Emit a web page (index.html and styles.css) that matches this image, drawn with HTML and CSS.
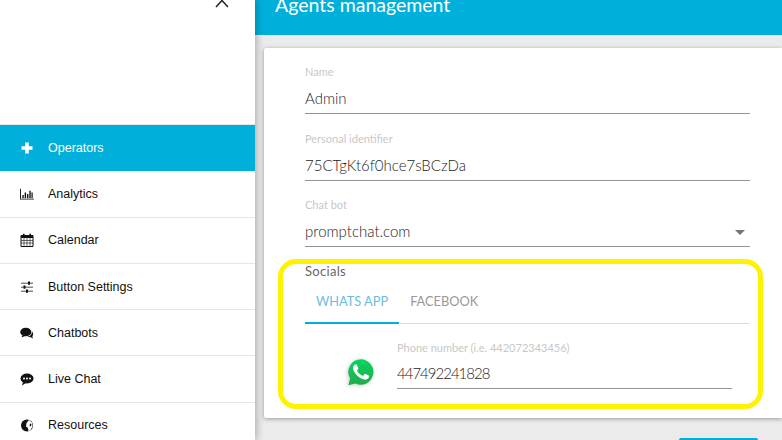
FILE: index.html
```html
<!DOCTYPE html>
<html lang="en">
<head>
    <meta charset="UTF-8">
    <title>Agents management</title>
    <link rel="stylesheet" href="styles.css">
</head>
<body>
    <div class="page">
        <div class="sidebar">
            <div class="sidebar-top">
                <svg class="close-icon" width="14" height="14" viewBox="0 0 14 14"><path d="M1 8 L7 1.500 L13 8" fill="none" stroke="#222" stroke-width="1.500"/></svg>
            </div>
            <div class="nav-item active">
                <svg class="nav-icon" viewBox="0 0 14 14"><path d="M5.200 1.500h3.600v3.700h3.700v3.600H8.800v3.700H5.200V8.800H1.500V5.200h3.700z" fill="#fff"/></svg>
                <span>Operators</span>
            </div>
            <div class="nav-item">
                <svg class="nav-icon" viewBox="0 0 15 14"><path d="M0 1.500h1v10.500h14v1H0z" fill="#111"/><path d="M2.500 8h1.500v3.500H2.500zM5 5.500h1.500v6H5zM7.500 7h1.500v4.500H7.500zM10 3.500h1.500v8H10zM12.300 5.500h1.300v6h-1.300z" fill="#111"/></svg>
                <span>Analytics</span>
            </div>
            <div class="nav-item">
                <svg class="nav-icon" viewBox="0 0 14 14"><path d="M1 2.500h12v11H1z" fill="none" stroke="#111"/><path d="M1 2.500h12v2.500H1zM3 .7h1.600v3H3zM9.400 .7H11v3H9.400z" fill="#111"/><path d="M1 7.500h12M1 10h12M4 5v8M7 5v8M10 5v8" stroke="#111" stroke-width=".6"/></svg>
                <span>Calendar</span>
            </div>
            <div class="nav-item">
                <svg class="nav-icon" viewBox="0 0 14 14"><path d="M1 2.800h12v.8H1zM1 6.800h12v.8H1zM1 10.800h12v.8H1z" fill="#111"/><path d="M8 1.500h2v3.300H8zM3.500 5.500h2v3.300h-2zM6 9.500h2v3.300H6z" fill="#111"/></svg>
                <span>Button Settings</span>
            </div>
            <div class="nav-item">
                <svg class="nav-icon" viewBox="0 0 14 14"><ellipse cx="5.800" cy="6" rx="5.600" ry="4.300" fill="#111"/><path d="M2.500 9l-1 2.500 3.500-1.500z" fill="#111"/><path d="M12 5.500c1.500 1.500 1.500 3.500.3 4.700l.7 2.300-2.800-1.400c-1 .2-2 .1-3-.3 2.700-.3 5-2.500 4.800-5.300z" fill="#111"/></svg>
                <span>Chatbots</span>
            </div>
            <div class="nav-item">
                <svg class="nav-icon" viewBox="0 0 14 14"><ellipse cx="7" cy="6.500" rx="6.500" ry="5" fill="#111"/><path d="M3 10l-1 3.500 4-2.500z" fill="#111"/><circle cx="4" cy="6.500" r="1" fill="#fff"/><circle cx="7" cy="6.500" r="1" fill="#fff"/><circle cx="10" cy="6.500" r="1" fill="#fff"/></svg>
                <span>Live Chat</span>
            </div>
            <div class="nav-item">
                <svg class="nav-icon" viewBox="0 0 14 14"><circle cx="7" cy="7.500" r="6" fill="#111"/><path d="M6.500 5l2.500-3 3 2.500 .5 4-2 3.500-2 1.500-.5-3.500-2-1.500z" fill="#fff"/><path d="M10 5.500l1.500 .5-.5 2-1.500 .5z" fill="#111"/></svg>
                <span>Resources</span>
            </div>
        </div>

        <div class="main">
            <div class="header">
                <h1>Agents management</h1>
            </div>
            <div class="content">
                <div class="card">
                    <div class="field">
                        <label>Name</label>
                        <div class="value">Admin</div>
                    </div>
                    <div class="field">
                        <label>Personal identifier</label>
                        <div class="value">75CTgKt6f0hce7sBCzDa</div>
                    </div>
                    <div class="field">
                        <label>Chat bot</label>
                        <div class="value select">promptchat.com<i class="caret"></i></div>
                    </div>
                    <div class="socials-title">Socials</div>
                    <div class="tabs">
                        <div class="tab active">WHATS APP</div>
                        <div class="tab">FACEBOOK</div>
                    </div>
                    <div class="social-row">
                        <svg class="whatsapp" width="32" height="32" viewBox="0 0 24 24">
                            <defs>
                                <linearGradient id="wa" x1="0" y1="0" x2="0" y2="1">
                                    <stop offset="0" stop-color="#05d561"/>
                                    <stop offset="1" stop-color="#22ab48"/>
                                </linearGradient>
                            </defs>
                            <path d="M12 2.500a9.500 9.500 0 0 0-8.200 14.300L2.500 22l5.300-1.400A9.500 9.500 0 1 0 12 2.500z" fill="url(#wa)"/>
                            <path d="M17.472 14.382c-.297-.149-1.758-.867-2.030-.967-.273-.099-.471-.148-.670.150-.197.297-.767.966-.940 1.164-.173.199-.347.223-.644.075-.297-.150-1.255-.463-2.390-1.475-.883-.788-1.480-1.761-1.653-2.059-.173-.297-.018-.458.130-.606.134-.133.298-.347.446-.520.149-.174.198-.298.298-.497.099-.198.050-.371-.025-.520-.075-.149-.669-1.612-.916-2.207-.242-.579-.487-.500-.669-.510-.173-.008-.371-.010-.570-.010-.198 0-.520.074-.792.372-.272.297-1.040 1.016-1.040 2.479 0 1.462 1.065 2.875 1.213 3.074.149.198 2.096 3.200 5.077 4.487.709.306 1.262.489 1.694.625.712.227 1.360.195 1.871.118.571-.085 1.758-.719 2.006-1.413.248-.694.248-1.289.173-1.413-.074-.124-.272-.198-.570-.347z" fill="#fff"/>
                        </svg>
                        <div class="field phone">
                            <label>Phone number (i.e. 442072343456)</label>
                            <div class="value">447492241828</div>
                        </div>
                    </div>
                </div>
                <div class="save-btn"></div>
            </div>
        </div>
    </div>
    <div class="highlight"></div>
</body>
</html>
```

FILE: styles.css
```css
html, body {
    margin: 0;
    padding: 0;
    height: 440px;
    overflow: hidden;
}

body {
    font-family: 'Lato', 'Liberation Sans', sans-serif;
    background-color: #ebebeb;
}

.page {
    display: flex;
    height: 440px;
}

.sidebar {
    width: 255px;
    flex-shrink: 0;
    background-color: #fff;
    box-shadow: 2px 0 7px rgba(0, 0, 0, 0.25);
    z-index: 2;
    font-family: 'Liberation Sans', sans-serif;
    font-size: 12.500px;
    color: #111;
}

.sidebar-top {
    height: 124px;
    border-bottom: 1px solid #e6e6e6;
    display: flex;
    justify-content: flex-end;
    overflow: hidden;
}

.close-icon {
    margin: -1px 26px 0 0;
}

.nav-item {
    display: flex;
    align-items: center;
    height: 45.300px;
    border-bottom: 1px solid #e6e6e6;
    padding-left: 20px;
}

.nav-item.active {
    background-color: #00b0da;
    color: #fff;
    border-bottom-color: transparent;
}

.nav-icon {
    width: 14px;
    height: 14px;
    margin-right: 14px;
}

.main {
    flex: 1;
    min-width: 0;
}

.header {
    height: 35px;
    background-color: #00b0da;
    overflow: hidden;
}

.header h1 {
    margin: -7px 0 0 20px;
    font-size: 19.500px;
    line-height: 24px;
    font-weight: 400;
    color: #fff;
}

.content {
    padding: 13px 0 0 9px;
}

.card {
    height: 370px;
    box-sizing: border-box;
    background-color: #fff;
    border-radius: 2px 0 0 2px;
    box-shadow: 0 1px 4px rgba(0, 0, 0, 0.35);
    padding: 17px 32px 0 41px;
}

.field {
    height: 66.500px;
}

.field label {
    display: block;
    font-size: 11px;
    line-height: 14px;
    color: #c8c8c8;
}

.value {
    position: relative;
    margin-top: 7px;
    height: 27px;
    line-height: 25px;
    font-size: 15px;
    font-weight: 300;
    color: #1c1c1c;
    border-bottom: 1px solid #949494;
}

.caret {
    position: absolute;
    right: 5px;
    top: 11px;
    border-left: 5px solid transparent;
    border-right: 5px solid transparent;
    border-top: 5px solid #757575;
}

.socials-title {
    font-size: 13px;
    letter-spacing: 0.3px;
    line-height: 16px;
    margin-top: -2px;
    color: #666;
}

.tabs {
    display: flex;
    border-bottom: 1px solid #ddd;
    height: 44px;
}

.tab {
    font-size: 12.800px;
    line-height: 44px;
    height: 44px;
    padding: 0 11px;
    color: #999;
}

.tab.active {
    color: #6bbde3;
    border-bottom: 2px solid #00b0da;
    height: 43px;
}

.social-row {
    display: flex;
    margin: 17px 18px 0 0;
}

.social-row .value {
    letter-spacing: -1px;
    margin-top: 6px;
    height: 27px;
}

.whatsapp {
    margin: 15px 20px 0 40px;
    flex-shrink: 0;
    filter: drop-shadow(-1px 1px 2px rgba(0, 0, 0, 0.2));
}

.phone {
    flex: 1;
}

.save-btn {
    position: absolute;
    left: 679px;
    top: 438px;
    width: 79px;
    height: 10px;
    background-color: #00b0da;
    border-radius: 2px;
}

.highlight {
    position: absolute;
    left: 278px;
    top: 259px;
    width: 475px;
    height: 140px;
    border: 5px solid #fff200;
    border-radius: 18px;
    z-index: 3;
}
```
